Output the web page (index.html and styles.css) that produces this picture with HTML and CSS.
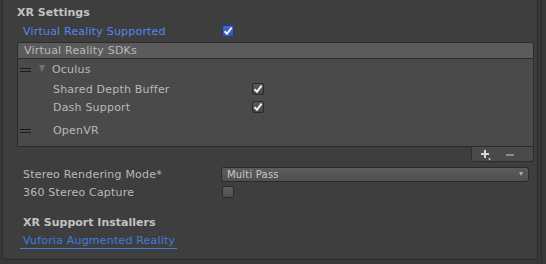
FILE: index.html
```html
<!DOCTYPE html>
<html lang="en">
<head>
    <meta charset="UTF-8">
    <title>XR Settings</title>
    <link rel="stylesheet" href="styles.css">
</head>
<body>
    <div class="panel">
        <div class="title">XR Settings</div>

        <div class="row">
            <span class="label prefab">Virtual Reality Supported</span>
            <span class="check on-blue">
                <svg viewBox="0 0 12 12"><path d="M2.5 6.2 L5 8.8 L9.6 2.6" /></svg>
            </span>
        </div>

        <!-- SDK 목록 -->
        <div class="sdk-list">
            <div class="sdk-header">Virtual Reality SDKs</div>
            <div class="sdk-body">
                <div class="sdk-item">
                    <span class="handle"></span>
                    <span class="fold"></span>
                    <span class="label-sm">Oculus</span>
                </div>
                <div class="sdk-prop first">
                    <span class="label">Shared Depth Buffer</span>
                    <span class="check on">
                        <svg viewBox="0 0 12 12"><path d="M2.5 6.2 L5 8.8 L9.6 2.6" /></svg>
                    </span>
                </div>
                <div class="sdk-prop">
                    <span class="label">Dash Support</span>
                    <span class="check on">
                        <svg viewBox="0 0 12 12"><path d="M2.5 6.2 L5 8.8 L9.6 2.6" /></svg>
                    </span>
                </div>
                <div class="sdk-item openvr">
                    <span class="handle"></span>
                    <span class="label-sm">OpenVR</span>
                </div>
            </div>
            <div class="sdk-footer">
                <svg class="add" viewBox="0 0 12 12">
                    <rect x="0" y="3" width="8" height="2" />
                    <rect x="3" y="0" width="2" height="8" />
                    <path d="M7 8.5 L10 8.5 L8.5 10.5 Z" />
                </svg>
                <span class="minus"></span>
            </div>
        </div>

        <div class="row">
            <span class="label">Stereo Rendering Mode*</span>
            <div class="dropdown">
                <span>Multi Pass</span>
                <span class="arrow"></span>
            </div>
        </div>

        <div class="row">
            <span class="label">360 Stereo Capture</span>
            <span class="check"></span>
        </div>

        <div class="row sub-title">XR Support Installers</div>

        <div class="row">
            <a class="link">Vuforia Augmented Reality</a>
        </div>
    </div>
    <div class="gutter"></div>
</body>
</html>
```

FILE: styles.css
```css
body {
    margin: 0;
    width: 546px;
    height: 264px;
    overflow: hidden;
    background: #383838;
    display: flex;
    align-items: flex-start;
    font-family: "DejaVu Sans", Verdana, sans-serif;
    font-size: 11px;
    letter-spacing: 0.2px;
    color: #b9b9b9;
}

.panel {
    flex: 1;
    margin: -4px 0 0 2px;
    height: 264px;
    padding: 7px 0 0 14px;
    background: #3e3e3e;
    border: 1px solid #2b2b2b;
    border-radius: 4px;
    box-sizing: border-box;
}

.gutter {
    width: 4px;
    height: 264px;
    margin-left: 3px;
    border-left: 1px solid #2b2b2b;
}

.title {
    height: 18px;
    line-height: 18px;
    font-weight: bold;
    color: #c2c2c2;
    letter-spacing: 0;
}

.row {
    display: flex;
    align-items: center;
    height: 18px;
    margin-left: 6px;
}

.label {
    width: 199px;
    flex-shrink: 0;
    white-space: nowrap;
}

.prefab { color: #5686f1; }

/* 체크박스 */
.check {
    width: 10px;
    height: 10px;
    border: 1px solid #2a2a2a;
    border-radius: 2px;
    background: linear-gradient(#5f5f5f, #4e4e4e);
    display: flex;
}
.check svg {
    width: 12px;
    height: 12px;
    margin: -1px;
    fill: none;
    stroke: #f2f2f2;
    stroke-width: 2;
}
.check.on { background: linear-gradient(#5a5a5a, #474747); }
.check.on-blue {
    background: linear-gradient(#4468d6, #3453b8);
    border-color: #233a85;
}

/* SDK 목록 */
.sdk-list {
    margin: 2px 3px 0 0;
}
.sdk-header {
    height: 15px;
    line-height: 15px;
    padding-left: 6px;
    background: #5b5b5b;
    border: 1px solid #2c2c2c;
    border-radius: 3px 3px 0 0;
    color: #b8b8b8;
}
.sdk-body {
    background: #4a4a4a;
    border: 1px solid #2c2c2c;
    border-top: none;
    padding: 1px 0 7px;
}
.sdk-item {
    display: flex;
    align-items: center;
    height: 18px;
    padding-left: 2px;
}
.sdk-item.openvr { margin-top: 5px; }
.handle {
    width: 11px;
    height: 2px;
    border-top: 1px solid #1c1c1c;
    border-bottom: 1px solid #1c1c1c;
    margin: 2px 8px 0 0;
}
.fold {
    width: 0;
    height: 0;
    border-left: 3.5px solid transparent;
    border-right: 3.5px solid transparent;
    border-top: 7px solid #727272;
    margin: -1px 7px 0 0;
}
.openvr .label-sm { margin-left: 14px; }
.sdk-prop {
    display: flex;
    align-items: center;
    height: 18px;
    padding-left: 35px;
}
.sdk-prop.first { margin-top: 2px; }
.sdk-footer {
    width: 52px;
    height: 14px;
    margin-left: auto;
    background: #4a4a4a;
    border: 1px solid #2c2c2c;
    border-top: none;
    border-radius: 0 0 3px 3px;
    display: flex;
    align-items: center;
    gap: 13px;
    padding-left: 9px;
    box-sizing: content-box;
}
.add {
    width: 12px;
    height: 12px;
    fill: #d8d8d8;
    margin-top: 3px;
}
.minus {
    width: 8px;
    height: 2px;
    background: #8a8a8a;
    margin-top: 1px;
}

.sdk-list + .row { margin-top: 3px; }

/* 드롭다운 */
.dropdown {
    width: 296px;
    height: 13px;
    border: 1px solid #2a2a2a;
    border-radius: 3px;
    background: linear-gradient(#5c5c5c, #4f4f4f);
    display: flex;
    align-items: center;
    justify-content: space-between;
    padding: 0 5px;
    box-sizing: content-box;
    font-size: 10px;
    color: #c8c8c8;
    margin-left: -1px;
}
.arrow {
    width: 0;
    height: 0;
    border-left: 2.5px solid transparent;
    border-right: 2.5px solid transparent;
    border-top: 4px solid #b0b0b0;
}

.sub-title {
    margin-top: 12px;
    font-weight: bold;
    color: #c2c2c2;
    letter-spacing: 0;
}

.link {
    color: #3f7dde;
    white-space: nowrap;
    border-bottom: 1px solid #3f7dde;
    padding: 0 2px 1px 3px;
    margin: 3px 0 0 -3px;
}
```
